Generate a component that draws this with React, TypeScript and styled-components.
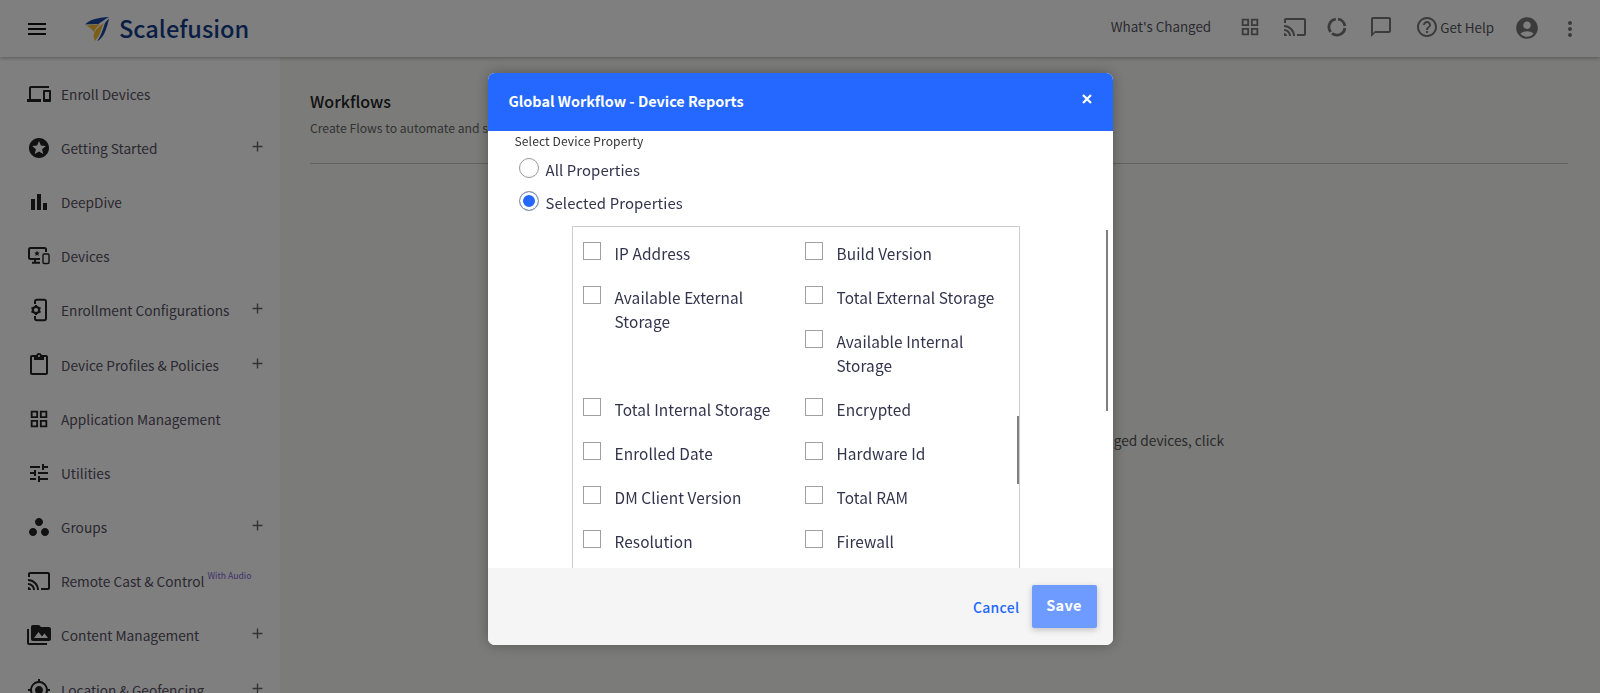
import React from 'react';
import styled, { createGlobalStyle } from 'styled-components';
import {
  MdMenu, MdOutlineDevices, MdStars, MdBarChart, MdOutlineContentPaste, MdOutlineGridView, MdTune,
  MdWorkspaces, MdOutlineCast, MdPermMedia, MdMyLocation, MdAdd, MdOutlineChatBubbleOutline,
  MdHelpOutline, MdAccountCircle, MdMoreVert,
} from 'react-icons/md';

const font = `"Noto Sans CJK JP", "Noto Sans", sans-serif`;

const Global = createGlobalStyle`
  html, body { margin: 0; padding: 0; height: 693px; overflow: hidden; background: #f6f8f4; }
  body { font-family: ${font}; }
  * { box-sizing: border-box; }
`;

const Page = styled.div`
  width: 1600px;
  height: 693px;
  display: flex;
  flex-direction: column;
  overflow: hidden;
`;
const Header = styled.header`
  height: 57px;
  flex: none;
  background: #fff;
  display: flex;
  align-items: center;
  padding: 0 18px 0 25px;
  box-shadow: 0 1px 4px rgba(0, 0, 0, 0.3);
  position: relative;
  z-index: 1;
`;
const MenuBtn = styled.span`
  display: flex;
  font-size: 24px;
  color: #111;
  margin-right: 36px;
`;
const LogoMark = styled.svg`
  flex: none;
  margin-top: 1px;
`;
const LogoText = styled.span`
  font-size: 23.6px;
  font-weight: 500;
  color: #123c8a;
  margin-left: 10px;
  line-height: 1;
`;
const Spacer = styled.div`
  flex: 1;
`;
const TopGroup = styled.div`
  display: flex;
  align-items: center;
  margin-top: -4px;
`;
const TopText = styled.span<{ $ml?: number; $dy?: number }>`
  font-size: 13.4px;
  color: #55555f;
  margin-left: ${(p) => p.$ml ?? 0}px;
  margin-top: ${(p) => p.$dy ?? 0}px;
`;
const TopIcon = styled.span<{ $size?: number; $ml: number; $dy?: number }>`
  display: flex;
  font-size: ${(p) => p.$size ?? 24}px;
  color: #777;
  margin-left: ${(p) => p.$ml}px;
  margin-top: ${(p) => p.$dy ?? 0}px;
`;
const Main = styled.div`
  flex: 1;
  display: flex;
  min-height: 0;
`;
const Sidebar = styled.nav`
  width: 280px;
  flex: none;
  background: #fff;
  box-shadow: 1px 0 3px rgba(0, 0, 0, 0.12);
  padding-top: 9.5px;
  overflow: hidden;
`;
const NavRow = styled.div`
  height: 54.2px;
  display: flex;
  align-items: center;
  padding: 0 14px 0 27px;
  flex: none;
`;
const NavIcon = styled.span<{ $size?: number }>`
  width: 24px;
  height: 24px;
  font-size: ${(p) => p.$size ?? 24}px;
  color: #222;
  display: flex;
  align-items: center;
  justify-content: center;
  margin-right: 10px;
`;
const NavLabel = styled.span`
  font-size: 13.7px;
  color: #56505f;
  white-space: nowrap;
`;
const Sup = styled.span`
  font-size: 8.7px;
  color: #7f66d8;
  margin-left: 3px;
  line-height: 1;
  white-space: nowrap;
  margin-top: -10px;
`;
const Plus = styled.span`
  margin-left: auto;
  margin-top: -3px;
  display: flex;
  font-size: 17px;
  color: #666;
`;
const Content = styled.main`
  flex: 1;
  background: #f6f8f4;
  padding: 33px 32px 0 30px;
  display: flex;
  flex-direction: column;
`;
const PageTitle = styled.h1`
  margin: 0;
  font-size: 16px;
  font-weight: 500;
  color: #222;
  line-height: 22px;
`;
const PageSub = styled.p`
  margin: 7px 0 0;
  font-size: 12.2px;
  color: #666;
  line-height: 18px;
`;
const Rule = styled.hr`
  margin: 26px 0 0;
  border: 0;
  border-top: 1px solid #c4c4c4;
`;
const EmptyNote = styled.p`
  margin: 266px 0 0;
  font-size: 13.7px;
  color: #555;
  line-height: 20px;
  text-align: right;
  padding-right: 344px;
`;
const Overlay = styled.div`
  position: fixed;
  inset: 0;
  background: rgba(0, 0, 0, 0.5);
  z-index: 5;
  display: flex;
  justify-content: center;
  padding-top: 73px;
`;
const Modal = styled.div`
  position: relative;
  width: 625px;
  height: 572px;
  border-radius: 7px;
  background: #fff;
  overflow: hidden;
  display: flex;
  flex-direction: column;
`;
const ModalShadow = styled.div`
  border-radius: 7px;
  height: 572px;
  box-shadow: 0 0 14px rgba(0, 0, 0, 0.3);
`;
const ModalHead = styled.div`
  height: 58px;
  flex: none;
  background: #2468ff;
  display: flex;
  align-items: center;
  justify-content: space-between;
  padding: 0 21px 0 21px;
  color: #fff;
`;
const ModalTitle = styled.h2`
  margin: 0 0 3px;
  font-size: 14.4px;
  font-weight: 700;
`;
const Close = styled.svg`
  display: block;
  margin-top: -6px;
`;
const ModalBody = styled.div`
  flex: 1;
  min-height: 0;
  overflow: hidden;
  padding: 1px 0 0 27px;
`;
const FieldLabel = styled.div`
  font-size: 12.1px;
  color: #333;
  line-height: 18px;
  letter-spacing: 0.1px;
  margin-bottom: 3px;
`;
const RadioRow = styled.label`
  height: 33px;
  display: flex;
  align-items: center;
  font-size: 14.9px;
  color: #33334d;
  padding-left: 4px;
  letter-spacing: 0.1px;
`;
const Radio = styled.span<{ $on?: boolean }>`
  width: 20px;
  height: 20px;
  flex: none;
  border-radius: 50%;
  border: 1px solid #999;
  margin: -3px 7px 0 0;
  background: ${(p) => (p.$on ? '#2468ff' : '#fff')};
  box-shadow: ${(p) => (p.$on ? 'inset 0 0 0 3px #fff' : 'none')};
`;
const List = styled.div`
  margin: 7px 0 0 57px;
  width: 448px;
  height: 400px;
  border: 1px solid #ccc;
  border-bottom: 0;
  padding: 15px 0 0 10px;
  display: grid;
  grid-template-columns: 222px 1fr;
  align-content: start;
  overflow: hidden;
`;
const Item = styled.label<{ $span?: number; $col?: number }>`
  grid-column: ${(p) => p.$col ?? 'auto'};
  grid-row: ${(p) => (p.$span ? `span ${p.$span}` : 'auto')};
  display: flex;
  align-items: flex-start;
  padding: 0 22px 20.7px 0;
  font-size: 15.4px;
  line-height: 23.4px;
  color: #33334d;
  letter-spacing: 0.1px;
`;
const Box = styled.span`
  width: 18px;
  height: 18px;
  flex: none;
  border: 1px solid #a0a0a0;
  margin-right: 14px;
`;
const ItemText = styled.span`
  margin-top: 0;
`;
const Thumb = styled.div<{ $x: number; $y: number; $h: number; $w: number }>`
  position: absolute;
  left: ${(p) => p.$x}px;
  top: ${(p) => p.$y}px;
  width: ${(p) => p.$w}px;
  height: ${(p) => p.$h}px;
  background: #808080;
`;
const ModalFoot = styled.div`
  height: 77px;
  flex: none;
  background: #f5f5f5;
  display: flex;
  align-items: center;
  justify-content: flex-end;
  padding: 0 16px 0 0;
  position: relative;
`;
const CancelBtn = styled.span`
  font-size: 14px;
  font-weight: 500;
  color: #2468ff;
  margin: 1px 12px 0 0;
  letter-spacing: 0.3px;
`;
const SaveBtn = styled.span`
  width: 65px;
  height: 43px;
  background: #6e9bff;
  color: #fff;
  font-size: 14.5px;
  font-weight: 700;
  border-radius: 2px;
  display: flex;
  align-items: center;
  justify-content: center;
  padding-bottom: 5px;
  letter-spacing: 0.3px;
  box-shadow: 0 2px 6px rgba(0, 0, 0, 0.22);
`;

const Logo = () => (
  <LogoMark width="24" height="24" viewBox="0 0 24 24">
    <path d="M0 7.500C4 3 12 .5 24 0C19 3 16 5 13.500 7C9 7 4 7.200 0 7.500Z" fill="#1a46a0" />
    <path d="M1 8.500C6 8 11 7.800 15 7C12 9.500 10 12 9 15C7 12 4 10 1 8.500Z" fill="#f5bc30" />
    <path d="M10 24C8 20 8.500 17 10 14.500C12 11 15 8.500 19 6C17 10 16 13 15 16C13.500 19 12 21.500 10 24Z" fill="#f5bc30" />
    <path d="M12 24.500C16 22 18 19 19 17C21 13 23 7 24 1.500C22 3.500 20.500 5 19.800 6.500C18 12 16 19 12 24.500Z" fill="#1a46a0" />
  </LogoMark>
);
const DevicesIcon = () => (
  <svg width="24" height="24" viewBox="0 0 24 24" fill="none" stroke="#222" strokeWidth="2">
    <path d="M13 15H3.500A1.500 1.500 0 0 1 2 13.500V5.500A1.500 1.500 0 0 1 3.500 4H17.500A1.500 1.500 0 0 1 19 5.500V8" />
    <path d="M8 15.500V18M5 18.800H13" strokeWidth="2" />
    <path d="M10 6.500l.8 1.900 2 .2-1.500 1.300.5 2-1.800-1.100-1.800 1.100.5-2-1.500-1.300 2-.2z" fill="#222" stroke="none" />
    <rect x="16" y="10" width="6" height="9.500" rx="1" strokeWidth="1.400" />
  </svg>
);
const PhoneGear = () => (
  <svg width="24" height="24" viewBox="0 0 24 24" fill="none">
    <path d="M8 6V3.500A1.800 1.800 0 0 1 9.800 1.800H17.200A1.800 1.800 0 0 1 19 3.500V20.500A1.800 1.800 0 0 1 17.200 22.200H9.800A1.800 1.800 0 0 1 8 20.500V18" stroke="#222" strokeWidth="2" />
    <circle cx="9" cy="12" r="3.200" stroke="#222" strokeWidth="2.200" />
    <path d="M9 7V9M9 15V17M4.500 9.500L6 10.500M12 13.500L13.500 14.500M4.500 14.500L6 13.500M12 10.500L13.500 9.500" stroke="#222" strokeWidth="2" />
  </svg>
);
const Ring = () => (
  <svg width="20" height="20" viewBox="0 0 20 20" fill="none" stroke="#777" strokeWidth="2.800">
    <path d="M11 2.100A8 8 0 0 1 17.900 9" />
    <path d="M17.900 11A8 8 0 0 1 5 16.300" />
    <path d="M3.700 15A8 8 0 0 1 8.800 2.100" />
  </svg>
);

const nav: { icon: React.ReactNode; label: string; plus?: boolean; sup?: string; size?: number }[] = [
  { icon: <MdOutlineDevices />, label: 'Enroll Devices' },
  { icon: <MdStars />, label: 'Getting Started', plus: true },
  { icon: <MdBarChart />, label: 'DeepDive' },
  { icon: <DevicesIcon />, label: 'Devices' },
  { icon: <PhoneGear />, label: 'Enrollment Configurations', plus: true },
  { icon: <MdOutlineContentPaste />, label: 'Device Profiles & Policies', plus: true },
  { icon: <MdOutlineGridView />, label: 'Application Management', size: 22 },
  { icon: <MdTune />, label: 'Utilities' },
  { icon: <MdWorkspaces />, label: 'Groups', plus: true },
  { icon: <MdOutlineCast />, label: 'Remote Cast & Control', sup: 'With Audio' },
  { icon: <MdPermMedia />, label: 'Content Management', plus: true },
  { icon: <MdMyLocation />, label: 'Location & Geofencing', plus: true },
];

const items: { label: string; span?: number; col?: number }[] = [
  { label: 'IP Address' },
  { label: 'Build Version' },
  { label: 'Available External Storage', span: 2 },
  { label: 'Total External Storage' },
  { label: 'Available Internal Storage', col: 2 },
  { label: 'Total Internal Storage' },
  { label: 'Encrypted' },
  { label: 'Enrolled Date' },
  { label: 'Hardware Id' },
  { label: 'DM Client Version' },
  { label: 'Total RAM' },
  { label: 'Resolution' },
  { label: 'Firewall' },
];

export default function App() {
  return (
    <Page>
      <Global />
      <Header>
        <MenuBtn><MdMenu /></MenuBtn>
        <Logo />
        <LogoText>Scalefusion</LogoText>
        <Spacer />
        <TopGroup>
          <TopText $dy={-2}>What's Changed</TopText>
          <TopIcon $ml={28} $size={22}><MdOutlineGridView /></TopIcon>
          <TopIcon $ml={22}><MdOutlineCast /></TopIcon>
          <TopIcon $ml={20} $size={20}><Ring /></TopIcon>
          <TopIcon $ml={22}><MdOutlineChatBubbleOutline /></TopIcon>
          <TopIcon $ml={22}><MdHelpOutline /></TopIcon>
          <TopText $ml={1}>Get Help</TopText>
          <TopIcon $ml={20} $size={26} $dy={2}><MdAccountCircle /></TopIcon>
          <TopIcon $ml={18} $dy={4}><MdMoreVert /></TopIcon>
        </TopGroup>
      </Header>
      <Main>
        <Sidebar>
          {nav.map((n) => (
            <NavRow key={n.label}>
              <NavIcon $size={n.size}>{n.icon}</NavIcon>
              <NavLabel>{n.label}</NavLabel>
              {n.sup && <Sup>{n.sup}</Sup>}
              {n.plus && <Plus><MdAdd /></Plus>}
            </NavRow>
          ))}
        </Sidebar>
        <Content>
          <PageTitle>Workflows</PageTitle>
          <PageSub>Create Flows to automate and schedule actions on your devices</PageSub>
          <Rule />
          <EmptyNote>You have not created any Global Workflows for your managed devices, click</EmptyNote>
        </Content>
      </Main>
      <Overlay>
        <ModalShadow>
          <Modal>
            <ModalHead>
              <ModalTitle>Global Workflow - Device Reports</ModalTitle>
              <Close width="10" height="10" viewBox="0 0 10 10">
                <path d="M1 1L9 9M9 1L1 9" stroke="#fff" strokeWidth="2.200" />
              </Close>
            </ModalHead>
            <ModalBody>
              <FieldLabel>Select Device Property</FieldLabel>
              <RadioRow><Radio />All Properties</RadioRow>
              <RadioRow><Radio $on />Selected Properties</RadioRow>
              <List>
                {items.map((i) => (
                  <Item key={i.label} $span={i.span} $col={i.col}>
                    <Box />
                    <ItemText>{i.label}</ItemText>
                  </Item>
                ))}
              </List>
            </ModalBody>
            <Thumb $x={618} $y={157} $w={2} $h={181} />
            <Thumb $x={529} $y={343} $w={2} $h={68} />
            <ModalFoot>
              <CancelBtn>Cancel</CancelBtn>
              <SaveBtn>Save</SaveBtn>
            </ModalFoot>
          </Modal>
        </ModalShadow>
      </Overlay>
    </Page>
  );
}
